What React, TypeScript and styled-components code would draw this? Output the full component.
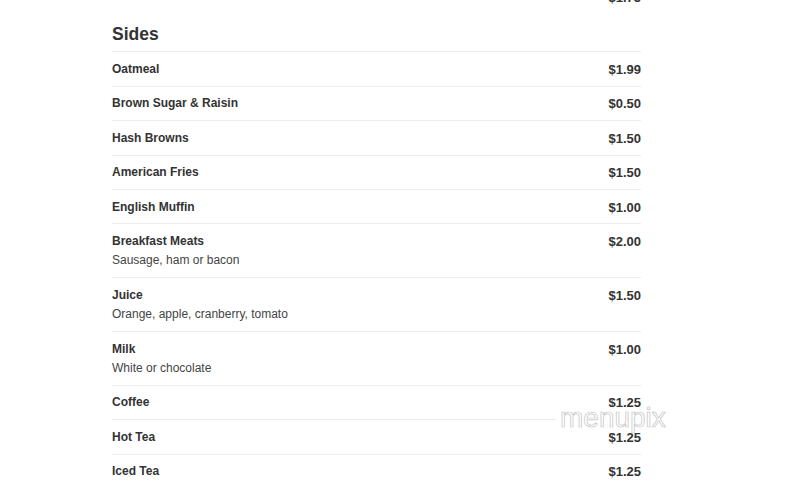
import React from "react";
import styled, { createGlobalStyle } from "styled-components";

const Global = createGlobalStyle`
  html, body { margin: 0; padding: 0; background: #fff; }
  body { font-family: "Liberation Sans", Arial, sans-serif; color: #333; overflow: hidden; }
`;

const Page = styled.div`
  position: relative;
  width: 792px;
  height: 500px;
  overflow: hidden;
`;

const Menu = styled.div`
  width: 529px;
  margin-left: 112px;
  margin-top: -20px;
  display: flex;
  flex-direction: column;
`;

const Row = styled.div<{ $last?: boolean }>`
  display: flex;
  justify-content: space-between;
  align-items: flex-start;
  padding: 10.5px 0 9.5px;
  border-bottom: ${(p) => (p.$last ? "none" : "1px solid #ececec")};
`;

const Info = styled.div`
  display: flex;
  flex-direction: column;
`;

const Name = styled.div`
  font-size: 12px;
  font-weight: bold;
  line-height: 13.4px;
  color: #333;
`;

const Desc = styled.div`
  font-size: 12px;
  line-height: 13.4px;
  margin-top: 6px;
  color: #444;
`;

const Price = styled.div`
  font-size: 13px;
  font-weight: bold;
  line-height: 13.4px;
  color: #333;
`;

const Heading = styled.h2`
  margin: 10px 0 0;
  font-size: 17.5px;
  font-weight: bold;
  line-height: 22px;
  padding-bottom: 6px;
  color: #333;
  border-bottom: 1px solid #ececec;
`;

const Watermark = styled.div`
  position: absolute;
  left: 556px;
  top: 407px;
  width: 142px;
  height: 21px;
  padding-left: 4px;
  box-sizing: border-box;
  background: rgba(255, 255, 255, 0.9);
  display: flex;
  align-items: center;
  font-family: "Liberation Sans", Arial, sans-serif;
  font-size: 28px;
  line-height: 21px;
  color: #fff;
  -webkit-text-stroke: 0.7px #c4c4c4;
`;

type Item = { name: string; price: string; desc?: string };

const items: Item[] = [
  { name: "Oatmeal", price: "$1.99" },
  { name: "Brown Sugar & Raisin", price: "$0.50" },
  { name: "Hash Browns", price: "$1.50" },
  { name: "American Fries", price: "$1.50" },
  { name: "English Muffin", price: "$1.00" },
  { name: "Breakfast Meats", price: "$2.00", desc: "Sausage, ham or bacon" },
  { name: "Juice", price: "$1.50", desc: "Orange, apple, cranberry, tomato" },
  { name: "Milk", price: "$1.00", desc: "White or chocolate" },
  { name: "Coffee", price: "$1.25" },
  { name: "Hot Tea", price: "$1.25" },
  { name: "Iced Tea", price: "$1.25" },
];

export default function App() {
  return (
    <Page>
      <Global />
      <Menu>
        <Row $last>
          <Info>
            <Name>&nbsp;</Name>
          </Info>
          <Price>$1.75</Price>
        </Row>
        <Heading>Sides</Heading>
        {items.map((it, i) => (
          <Row key={it.name} $last={i === items.length - 1}>
            <Info>
              <Name>{it.name}</Name>
              {it.desc && <Desc>{it.desc}</Desc>}
            </Info>
            <Price>{it.price}</Price>
          </Row>
        ))}
      </Menu>
      <Watermark>menupix</Watermark>
    </Page>
  );
}
